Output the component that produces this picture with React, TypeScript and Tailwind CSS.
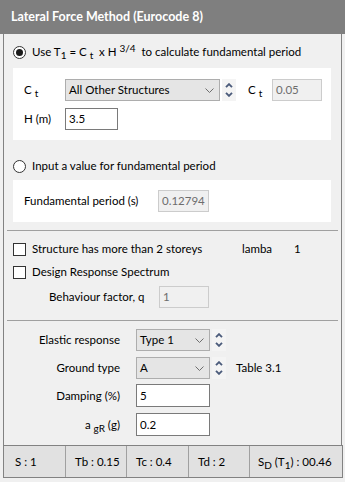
import React from "react";

function Radio({ checked }: { checked?: boolean }) {
  return (
    <span className="flex h-[13px] w-[13px] shrink-0 items-center justify-center rounded-full border border-[#333333] bg-white">
      {checked && <span className="h-[7px] w-[7px] rounded-full bg-[#1a1a1a]" />}
    </span>
  );
}

function Checkbox() {
  return <span className="h-[13px] w-[13px] shrink-0 border border-[#333333] bg-white" />;
}

function Select({ value, w }: { value: string; w: string }) {
  return (
    <div className={`flex h-[22px] items-center justify-between border border-[#adadad] bg-[#e5e5e5] pl-[3px] pr-[5px] ${w}`}>
      <span>{value}</span>
      <svg width="9" height="5" viewBox="0 0 9 5" fill="none">
        <path d="M0.5 0.5 L4.5 4.5 L8.5 0.5" stroke="#6e6e6e" strokeWidth="1" />
      </svg>
    </div>
  );
}

function Spinner() {
  return (
    <div className="ml-[2px] flex h-[22px] w-[14px] flex-col items-center justify-center gap-[4px] bg-[#f4f4f4]">
      <svg width="8" height="5" viewBox="0 0 8 5" fill="none">
        <path d="M1 4.2 L4 1.2 L7 4.2" stroke="#4b5b7b" strokeWidth="1.9" />
      </svg>
      <svg width="8" height="5" viewBox="0 0 8 5" fill="none">
        <path d="M1 0.8 L4 3.8 L7 0.8" stroke="#4b5b7b" strokeWidth="1.9" />
      </svg>
    </div>
  );
}

function Input({ value, w, disabled, h = "h-[22px]" }: { value: string; w: string; disabled?: boolean; h?: string }) {
  return (
    <div
      className={`flex items-center pl-[3px] ${h} ${w} border ${
        disabled ? "border-[#cccccc] bg-[#f0f0f0] text-[#6d6d6d]" : "border-[#7a7a7a] bg-white text-black"
      }`}
    >
      {value}
    </div>
  );
}

function Sub({ children }: { children: React.ReactNode }) {
  return <sub className="relative top-[3px] align-baseline text-[10px] leading-none">{children}</sub>;
}

export default function App() {
  return (
    <div className="flex h-[482px] w-[345px] flex-col bg-[#f0f0f0] font-['Segoe_UI','Lato',sans-serif] text-[11.5px] leading-none text-black">
      <div className="h-[34px] shrink-0 bg-[#7f7f7f] pl-[11px] pt-[11px] text-[12.5px] font-bold text-white">
        Lateral Force Method (Eurocode 8)
      </div>

      <div className="ml-[3px] flex w-[339px] flex-1 flex-col border-x border-[#828282]">
        <div className="mt-[9px] flex h-[18px] items-center gap-[6px] pl-[9px]">
          <Radio checked />
          <span>
            Use T<Sub>1</Sub> = C <Sub>t</Sub> &nbsp;x H{" "}
            <sup className="relative -top-[4px] align-baseline text-[10px]">3/4</sup> &nbsp;to calculate fundamental period
          </span>
        </div>

        <div className="ml-[9px] mr-[10px] mt-[7px] flex flex-col gap-[7px] bg-white pb-[10px] pl-[11px] pt-[11px]">
          <div className="flex items-center">
            <span className="w-[41px]">
              C <Sub>t</Sub>
            </span>
            <Select value="All Other Structures" w="w-[155px]" />
            <Spinner />
            <span className="ml-[12px] w-[24px]">
              C <Sub>t</Sub>
            </span>
            <Input value="0.05" w="w-[50px]" disabled />
          </div>
          <div className="flex items-center">
            <span className="w-[41px]">H (m)</span>
            <Input value="3.5" w="w-[53px]" />
          </div>
        </div>

        <div className="mt-[17px] flex h-[18px] items-center gap-[6px] pl-[9px]">
          <Radio />
          <span>Input a value for fundamental period</span>
        </div>

        <div className="ml-[9px] mr-[10px] mt-[5px] flex items-center bg-white py-[10px] pl-[11px]">
          <span className="w-[134px]">Fundamental period (s)</span>
          <Input value="0.12794" w="w-[51px]" disabled />
        </div>

        <div className="ml-[3px] mr-[3px] mt-[8px] h-px bg-[#a0a0a0]" />

        <div className="mt-[9px] flex h-[18px] items-center gap-[6px] pl-[9px]">
          <Checkbox />
          <span className="w-[204px]">Structure has more than 2 storeys</span>
          <span className="w-[46px]">lamba</span>
          <span>1</span>
        </div>

        <div className="mt-[5px] flex h-[18px] items-center gap-[6px] pl-[9px]">
          <Checkbox />
          <span>Design Response Spectrum</span>
        </div>

        <div className="mt-[5px] flex items-center pl-[45px]">
          <span className="w-[110px]">Behaviour factor, q</span>
          <Input value="1" w="w-[50px]" disabled />
        </div>

        <div className="ml-[3px] mr-[3px] mt-[12px] h-px bg-[#a0a0a0]" />

        <div className="mt-[8px] flex items-center">
          <span className="w-[116px] text-right">Elastic response</span>
          <div className="ml-[16px] flex items-center">
            <Select value="Type 1" w="w-[74px]" />
            <Spinner />
          </div>
        </div>

        <div className="mt-[6px] flex items-center">
          <span className="w-[116px] text-right">Ground type</span>
          <div className="ml-[16px] flex items-center">
            <Select value="A" w="w-[74px]" />
            <Spinner />
            <span className="ml-[10px]">Table 3.1</span>
          </div>
        </div>

        <div className="mt-[5px] flex items-center">
          <span className="w-[116px] text-right">Damping (%)</span>
          <div className="ml-[16px]">
            <Input value="5" w="w-[74px]" h="h-[23px]" />
          </div>
        </div>

        <div className="mt-[6px] flex items-center">
          <span className="w-[116px] text-right">
            a <Sub>gR</Sub> (g)
          </span>
          <div className="ml-[16px]">
            <Input value="0.2" w="w-[74px]" h="h-[23px]" />
          </div>
        </div>
      </div>

      <div className="ml-[3px] flex h-[33px] w-[340px] shrink-0 border border-[#828282] bg-[#e1e1e1]">
        <div className="flex w-[61px] items-center pl-[11px]">S : 1</div>
        <div className="flex w-[61px] items-center border-l border-[#a0a0a0] pl-[9px]">Tb : 0.15</div>
        <div className="flex w-[62px] items-center border-l border-[#a0a0a0] pl-[9px]">Tc : 0.4</div>
        <div className="flex w-[61px] items-center border-l border-[#a0a0a0] pl-[9px]">Td : 2</div>
        <div className="flex flex-1 items-center border-l border-[#a0a0a0] pl-[8px]">
          S<Sub>D</Sub>&nbsp;(T<Sub>1</Sub>) : 00.46
        </div>
      </div>
      <div className="h-[4px] shrink-0" />
    </div>
  );
}
